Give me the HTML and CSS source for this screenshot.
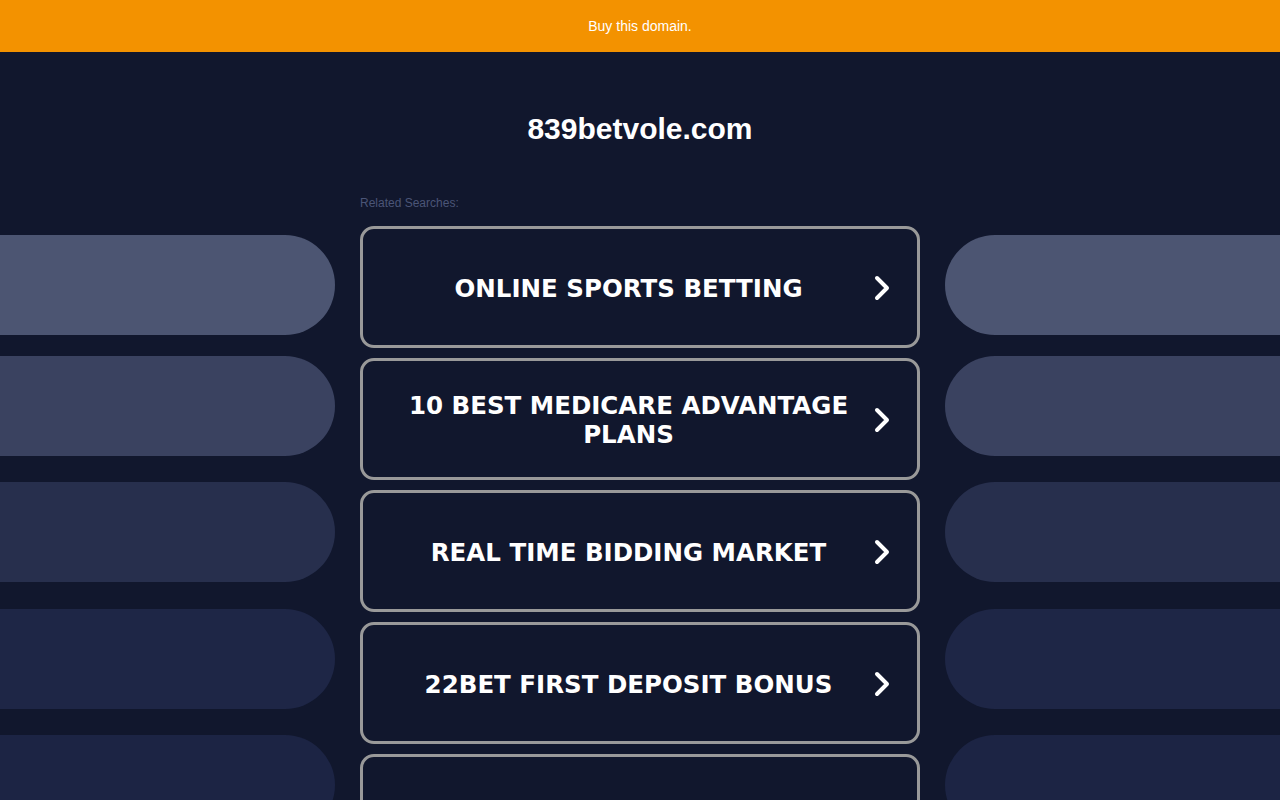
FILE: index.html
```html
<!DOCTYPE html>
<html lang="en">
<head>
<meta charset="utf-8">
<title>839betvole.com</title>
<link rel="stylesheet" href="styles.css">
</head>
<body>
<div class="topbar"><a class="buy" href="#">Buy this domain.</a></div>
<h1 class="domain">839betvole.com</h1>
<div class="layout">
  <div class="side side-left">
    <div class="pill p1"></div>
    <div class="pill p2"></div>
    <div class="pill p3"></div>
    <div class="pill p4"></div>
    <div class="pill p5"></div>
  </div>
  <div class="center">
    <div class="related">Related Searches:</div>
    <div class="links">
      <a class="link" href="#"><span class="label">ONLINE SPORTS BETTING</span><svg class="chev" width="16" height="26" viewBox="0 0 16 26"><path d="M3 3 L13 13 L3 23" fill="none" stroke="#fff" stroke-width="4" stroke-linecap="round" stroke-linejoin="round"/></svg></a>
      <a class="link" href="#"><span class="label">10 BEST MEDICARE ADVANTAGE PLANS</span><svg class="chev" width="16" height="26" viewBox="0 0 16 26"><path d="M3 3 L13 13 L3 23" fill="none" stroke="#fff" stroke-width="4" stroke-linecap="round" stroke-linejoin="round"/></svg></a>
      <a class="link" href="#"><span class="label">REAL TIME BIDDING MARKET</span><svg class="chev" width="16" height="26" viewBox="0 0 16 26"><path d="M3 3 L13 13 L3 23" fill="none" stroke="#fff" stroke-width="4" stroke-linecap="round" stroke-linejoin="round"/></svg></a>
      <a class="link" href="#"><span class="label">22BET FIRST DEPOSIT BONUS</span><svg class="chev" width="16" height="26" viewBox="0 0 16 26"><path d="M3 3 L13 13 L3 23" fill="none" stroke="#fff" stroke-width="4" stroke-linecap="round" stroke-linejoin="round"/></svg></a>
      <a class="link" href="#"><span class="label">ONLINE CASINO GAMES</span><svg class="chev" width="16" height="26" viewBox="0 0 16 26"><path d="M3 3 L13 13 L3 23" fill="none" stroke="#fff" stroke-width="4" stroke-linecap="round" stroke-linejoin="round"/></svg></a>
    </div>
  </div>
  <div class="side side-right">
    <div class="pill p1"></div>
    <div class="pill p2"></div>
    <div class="pill p3"></div>
    <div class="pill p4"></div>
    <div class="pill p5"></div>
  </div>
</div>
</body>
</html>
```
FILE: styles.css
```css
html, body {
  margin: 0;
  padding: 0;
  background: #11172d;
  font-family: "Liberation Sans", Arial, sans-serif;
  overflow: hidden;
}
.topbar {
  height: 52px;
  background: #f39200;
  display: flex;
  align-items: center;
  justify-content: center;
}
.buy {
  color: #fff;
  font-size: 14px;
  text-decoration: none;
}
.domain {
  margin: 0;
  padding-top: 60px;
  height: 34px;
  line-height: 34px;
  text-align: center;
  color: #fff;
  font-size: 30px;
  font-weight: bold;
}
.layout {
  margin-top: 50px;
  display: grid;
  grid-template-columns: 335px 560px 335px;
  column-gap: 25px;
}
.side {
  display: flex;
  flex-direction: column;
  padding-top: 39px;
}
.pill {
  height: 100px;
  flex: none;
}
.side-left .pill { border-radius: 0 50px 50px 0; }
.side-right .pill { border-radius: 50px 0 0 50px; }
.p1 { background: #4c5572; }
.p2 { background: #3a4260; margin-top: 21px; }
.p3 { background: #272f4d; margin-top: 26px; }
.p4 { background: #1e2646; margin-top: 27px; }
.p5 { background: #1c2444; margin-top: 26px; }
.related {
  color: #4b5577;
  font-size: 12px;
  line-height: 14px;
  height: 14px;
  margin-bottom: 16px;
}
.links {
  display: flex;
  flex-direction: column;
  gap: 10px;
}
.link {
  box-sizing: border-box;
  height: 122px;
  border: 3px solid #999;
  border-radius: 14px;
  display: flex;
  align-items: center;
  padding: 2px 27px 0 20px;
  text-decoration: none;
  color: #fff;
}
.label {
  flex: 1;
  text-align: center;
  font-family: "DejaVu Sans", Verdana, sans-serif;
  font-weight: bold;
  font-size: 24.5px;
  line-height: 29px;
  padding: 0 20px;
}
.chev {
  flex: none;
  display: block;
}
```
